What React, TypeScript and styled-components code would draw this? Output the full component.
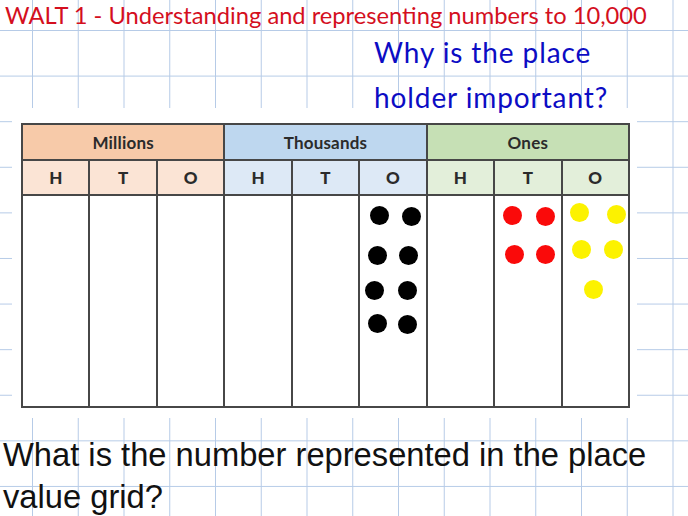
import React, { FC } from "react";
import styled, { createGlobalStyle } from "styled-components";

const GlobalStyle = createGlobalStyle`
    html, body {
        margin: 0;
        padding: 0;
        background: #ffffff;
    }
`;

const Page = styled.div`
    width: 688px;
    height: 516px;
    overflow: hidden;
    background-color: #ffffff;
    background-image:
        linear-gradient(to right, #b6cbe7 1px, transparent 1px),
        linear-gradient(to bottom, #b6cbe7 1px, transparent 1px);
    background-size: 45.75px 45.6px;
    background-position: 32px 0, 0 30px;
`;

const Header = styled.div`
    height: 108px;
`;

const Title = styled.h1`
    margin: 0;
    padding-left: 5px;
    height: 30px;
    font-family: "Lato", "Open Sans", sans-serif;
    font-weight: 400;
    font-size: 23.7px;
    line-height: 30px;
    color: #d40f1e;
    white-space: nowrap;
`;

const Question = styled.p`
    margin: 0 0 0 374px;
    font-family: "Lato", "Open Sans", sans-serif;
    font-size: 28px;
    letter-spacing: 0.9px;
    line-height: 45px;
    color: #0c0cc4;
    white-space: nowrap;
`;

const Sheet = styled.div`
    margin-left: 12px;
    width: 625px;
    height: 310px;
    box-sizing: border-box;
    padding: 15px 7px 10px 9px;
    background: #ffffff;
`;

const Grid = styled.table`
    width: 609px;
    height: 285px;
    border-collapse: collapse;
    table-layout: fixed;
    border: 2px solid #474747;
    font-family: "Lato", "Open Sans", sans-serif;
    font-weight: 700;
    color: #2b2b2b;
`;

const GroupCell = styled.th<{ bg: string }>`
    height: 34px;
    padding: 0;
    background: ${({ bg }) => bg};
    border: 2px solid #474747;
    font-size: 17px;
    font-weight: 700;
    letter-spacing: 0.2px;
    text-align: center;
`;

const PlaceCell = styled.th<{ bg: string }>`
    height: 33px;
    padding: 0;
    background: ${({ bg }) => bg};
    border: 2px solid #474747;
    font-size: 17px;
    font-weight: 900;
    text-align: center;
`;

const BodyCell = styled.td`
    position: relative;
    padding: 0;
    border: 2px solid #474747;
    background: #ffffff;
`;

const Counter = styled.span<{ color: string }>`
    position: absolute;
    width: 19px;
    height: 19px;
    margin: -9.5px 0 0 -9.5px;
    border-radius: 50%;
    background: ${({ color }) => color};
`;

const Bottom = styled.p`
    margin: 16px 0 0 0;
    padding-left: 3px;
    font-family: "Liberation Sans", Arial, sans-serif;
    font-size: 32.7px;
    line-height: 42px;
    color: #111111;
`;

type Dot = [number, number];

const groups = [
    { name: "Millions", head: "#f7caa9", sub: "#fbe4d5" },
    { name: "Thousands", head: "#bed7ef", sub: "#dde9f6" },
    { name: "Ones", head: "#c6e0b5", sub: "#e3efda" },
];

// counters per column (x, y = centre inside the cell)
const counters: { color: string; dots: Dot[] }[] = [
    { color: "#000", dots: [] },
    { color: "#000", dots: [] },
    { color: "#000", dots: [] },
    { color: "#000", dots: [] },
    { color: "#000", dots: [] },
    {
        color: "#000000",
        dots: [[19, 19], [51, 20], [17, 59], [48, 59], [14, 94], [47, 94], [17, 127], [47, 128]],
    },
    { color: "#000", dots: [] },
    { color: "#fa0a0a", dots: [[17, 19], [50, 20], [19, 58], [50, 58]] },
    { color: "#fcf200", dots: [[17, 16], [54, 18], [19, 53], [51, 53], [31, 93]] },
];

const App: FC = () => {
    return (
        <Page>
            <GlobalStyle />
            <Header>
                <Title>WALT 1 - Understanding and representing numbers to 10,000</Title>
                <Question>
                    Why is the place
                    <br />
                    holder important?
                </Question>
            </Header>
            <Sheet>
                <Grid>
                    <thead>
                        <tr>
                            {groups.map((g) => (
                                <GroupCell key={g.name} bg={g.head} colSpan={3}>
                                    {g.name}
                                </GroupCell>
                            ))}
                        </tr>
                        <tr>
                            {groups.map((g) =>
                                ["H", "T", "O"].map((p) => (
                                    <PlaceCell key={g.name + p} bg={g.sub}>
                                        {p}
                                    </PlaceCell>
                                ))
                            )}
                        </tr>
                    </thead>
                    <tbody>
                        <tr>
                            {counters.map((c, i) => (
                                <BodyCell key={i}>
                                    {c.dots.map(([x, y], j) => (
                                        <Counter key={j} color={c.color} style={{ left: x, top: y }} />
                                    ))}
                                </BodyCell>
                            ))}
                        </tr>
                    </tbody>
                </Grid>
            </Sheet>
            <Bottom>
                What is the number represented in the place
                <br />
                value grid?
            </Bottom>
        </Page>
    );
};

export default App;
